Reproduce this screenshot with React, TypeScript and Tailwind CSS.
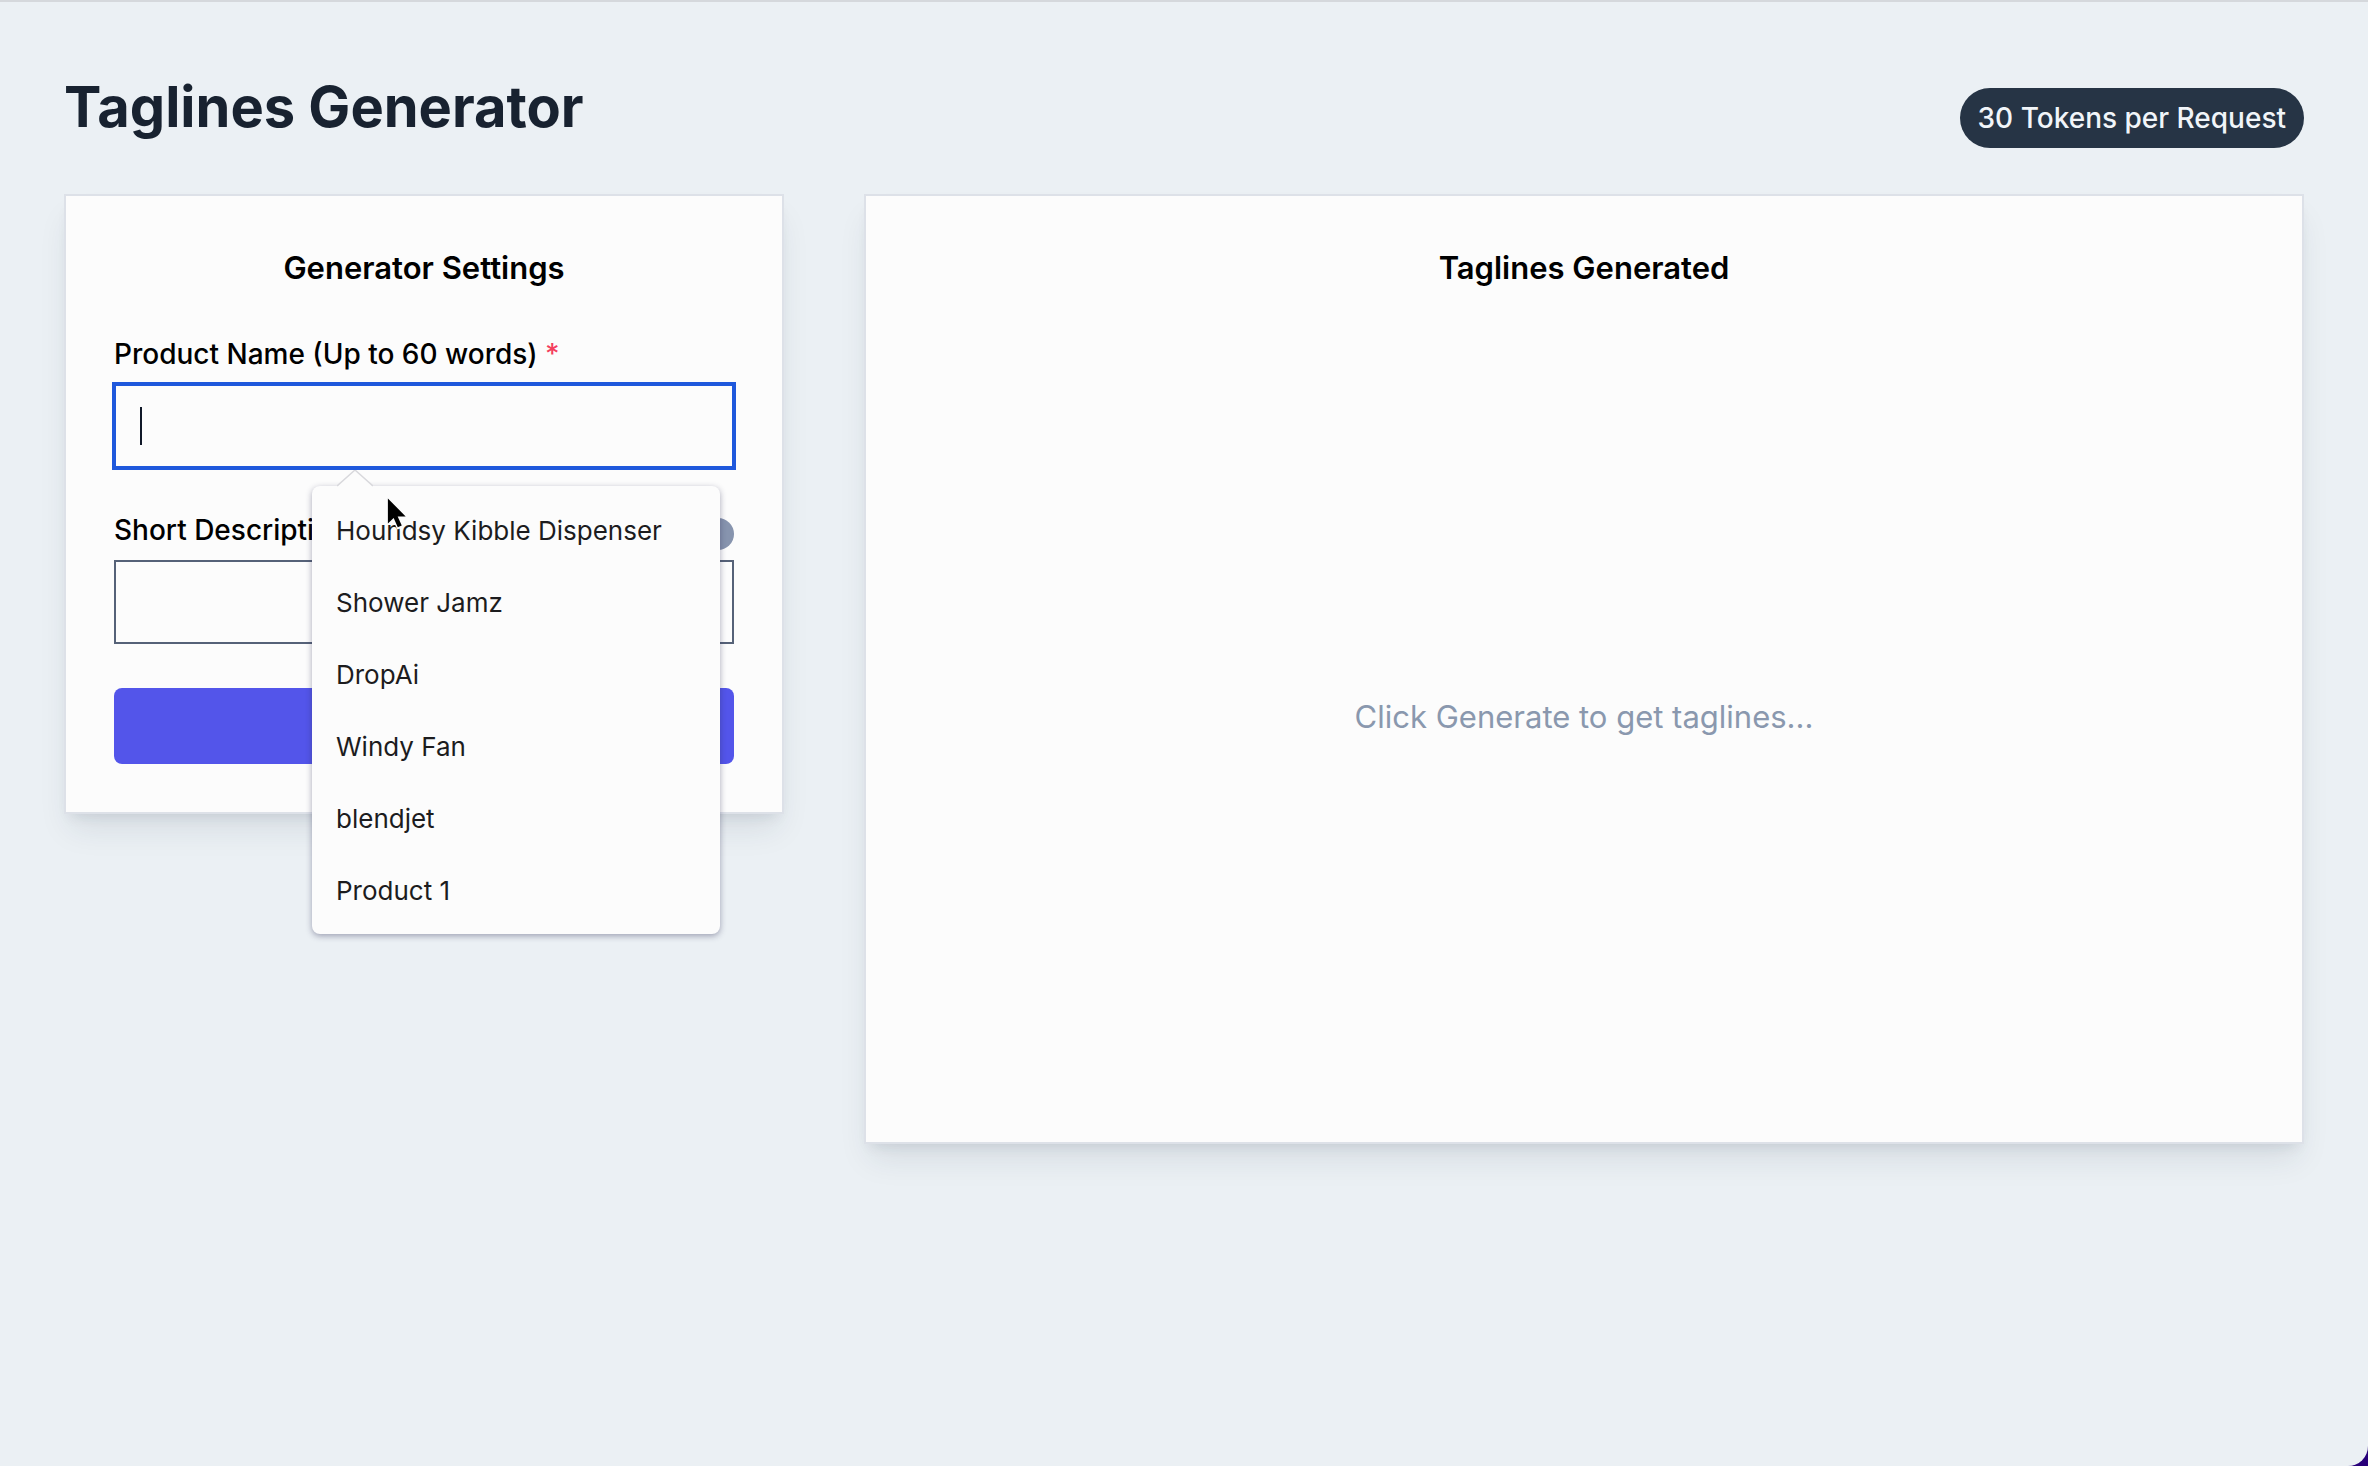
import React from "react";

const suggestions = [
  "Houndsy Kibble Dispenser",
  "Shower Jamz",
  "DropAi",
  "Windy Fan",
  "blendjet",
  "Product 1",
];

function Pointer() {
  return (
    <svg
      aria-hidden="true"
      className="pointer-events-none absolute left-[71px] top-2 h-10 w-8"
      viewBox="0 0 28 36"
    >
      <path
        d="M4 4v23l5.2-4.8 3.8 8.6 4-1.8-3.7-8.3H20z"
        fill="#fcfcfc"
        stroke="#fcfcfc"
        strokeWidth="2"
        strokeLinejoin="round"
      />
      <path d="M4 4v22.500l5.200-4.800 3.700 8.300 3.600-1.600-3.700-8.200H20z" fill="#000" />
    </svg>
  );
}

function Suggestions() {
  return (
    <div className="absolute left-[198px] top-[152px] z-10 w-[408px] rounded-lg bg-[#fcfcfc] py-2 shadow-[0_2px_6px_rgba(40,40,80,0.4)]">
      <svg
        aria-hidden="true"
        className="absolute -top-4 left-[25px] h-[17px] w-9"
        viewBox="0 0 36 17"
      >
        <path d="M0 17L18 0l18 17z" fill="#fcfcfc" />
        <path d="M0 16L18 0l18 16" fill="none" stroke="#d8d8dc" strokeWidth="1.5" />
      </svg>
      <ul role="listbox" aria-label="Product name suggestions">
        {suggestions.map((item) => (
          <li
            key={item}
            role="option"
            aria-selected="false"
            className="flex h-[72px] items-center px-6 text-[26px] text-[#1c1c1e]"
          >
            {item}
          </li>
        ))}
      </ul>
      <Pointer />
    </div>
  );
}

export default function App() {
  return (
    <div className="bg-[#28007a]">
      <main className="min-h-screen rounded-br-[20px] border-t-2 border-[#d5d8dc] bg-[#ebf0f4] px-16 pt-16 font-['Inter',sans-serif]">
        <header className="flex items-end justify-between">
          <h1 className="text-[56px] leading-[82px] font-bold text-[#182230]">
            Taglines Generator
          </h1>
          <span className="rounded-full bg-[#263445] px-[18px] py-2.5 text-[28px] leading-10 font-medium text-[#f1f5f9]">
            30 Tokens per Request
          </span>
        </header>

        <div className="mt-[46px] grid grid-cols-[1fr_2fr] items-start gap-20">
          <section className="border-2 border-[#dde1e8] bg-[#fcfcfc] p-12 shadow-[0_20px_30px_-6px_rgba(30,50,70,0.1),0_8px_12px_-6px_rgba(30,50,70,0.1)]">
            <h2 className="text-center text-[31px] leading-[48px] font-semibold text-black">
              Generator Settings
            </h2>
            <form className="mt-[42px]">
              <div className="relative">
                <label
                  htmlFor="product-name"
                  className="block text-[28px] leading-10 font-medium text-black"
                >
                  Product Name (Up to 60 words) <span className="text-[#f43f5e]">*</span>
                </label>
                <input
                  id="product-name"
                  type="text"
                  autoComplete="off"
                  className="mt-2.5 block h-[84px] w-full border-2 border-[#1f58dc] bg-[#fcfcfc] px-6 text-[28px] caret-transparent outline-2 outline-[#1f58dc]"
                />
                <span
                  aria-hidden="true"
                  className="absolute bottom-[23px] left-[26px] h-[38px] w-0.5 bg-[#101828]"
                />
                <Suggestions />
              </div>
              <div className="mt-[42px]">
                <div className="flex items-end justify-between">
                  <label
                    htmlFor="description"
                    className="text-[28px] leading-10 font-medium text-black"
                  >
                    Short Description
                  </label>
                  <button
                    type="button"
                    aria-label="Description help"
                    className="size-8 rounded-full bg-[#8794ae]"
                  />
                </div>
                <input
                  id="description"
                  type="text"
                  className="mt-2.5 block h-[84px] w-full border-2 border-[#566278] bg-[#fcfcfc] px-6 text-[28px]"
                />
              </div>
              <button
                type="submit"
                aria-label="Generate"
                className="mt-11 block h-[76px] w-full rounded-lg bg-[#5355ea]"
              />
            </form>
          </section>

          <section className="flex min-h-[950px] flex-col border-2 border-[#dde1e8] bg-[#fcfcfc] p-12 shadow-[0_20px_30px_-6px_rgba(30,50,70,0.1),0_8px_12px_-6px_rgba(30,50,70,0.1)]">
            <h2 className="text-center text-[31px] leading-[48px] font-semibold text-black">
              Taglines Generated
            </h2>
            <p className="flex flex-1 items-center justify-center pt-12 text-[31px] text-[#8a98ae]">
              Click Generate to get taglines...
            </p>
          </section>
        </div>
      </main>
    </div>
  );
}
